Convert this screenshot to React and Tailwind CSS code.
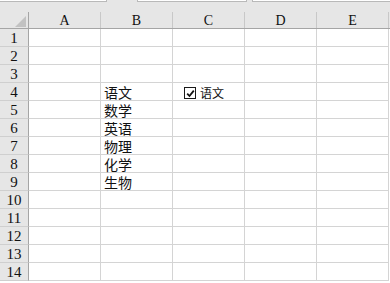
import React from 'react';

const cols = ['A', 'B', 'C', 'D', 'E'];
const rows = Array.from({ length: 14 }, (_, i) => i + 1);

// column B values, keyed by row number
const subjects = {
  4: '语文',
  5: '数学',
  6: '英语',
  7: '物理',
  8: '化学',
  9: '生物'
};

const headFont = { fontFamily: '"Liberation Serif", "DejaVu Serif", serif' };
const cjkFont = { fontFamily: '"Noto Sans CJK SC", sans-serif' };

function CheckBox() {
  return (
    <div className="flex items-center gap-[4px] pl-[11px] pt-[4px]">
      <div className="w-[12px] h-[12px] border border-[#1a1a1a] bg-white flex items-center justify-center">
        <svg width="9" height="9" viewBox="0 0 9 9">
          <path d="M1.2 4.6 L3.5 7 L7.8 1.6" fill="none" stroke="#111" strokeWidth="1.8" />
        </svg>
      </div>
      <span className="text-[12px] leading-[12px] text-[#111]" style={cjkFont}>语文</span>
    </div>
  );
}

export default function App() {
  return (
    <div className="w-[390px] h-[283px] overflow-hidden bg-white">
      {/* formula bar strip */}
      <div className="h-[12px] bg-[#e6e6e6] flex items-start gap-[30px]">
        <div className="w-[107px] h-[2px] bg-white border-b border-r border-[#b9b9b9]" />
        <div className="w-[110px] h-[2px] bg-white border-b border-x border-[#b9b9b9]" />
        <div className="flex-1 h-[2px] bg-white border-b border-l border-[#b9b9b9] -ml-[25px]" />
      </div>

      {/* column headers */}
      <div className="flex h-[17px] bg-[#e6e6e6] border-b border-[#a5a5a5]">
        <div className="w-[29px] shrink-0 border-r border-[#a5a5a5] relative">
          <svg className="absolute left-[15px] top-[4px]" width="11" height="11" viewBox="0 0 11 11">
            <polygon points="0,11 11,11 11,0" fill="#c2c2c2" />
          </svg>
        </div>
        {cols.map(c => (
          <div
            key={c}
            className="w-[72px] shrink-0 border-r border-[#c8c8c8] flex items-center justify-center text-[14px] leading-[14px] text-[#111] pt-[2px]"
            style={headFont}
          >
            {c}
          </div>
        ))}
      </div>

      {/* rows */}
      {rows.map(r => (
        <div key={r} className="flex h-[18px]">
          <div
            className="w-[29px] shrink-0 bg-[#e6e6e6] border-r border-[#a5a5a5] border-b border-b-[#cfcfcf] flex items-center justify-center text-[15px] leading-[15px] text-[#111] pt-[2px]"
            style={headFont}
          >
            {r}
          </div>
          {cols.map(c => (
            <div key={c} className="w-[72px] shrink-0 border-r border-b border-[#d4d4d4]">
              {c === 'B' && subjects[r] && (
                <div className="pl-[3px] pt-[2px] text-[14px] leading-[14px] text-[#111]" style={cjkFont}>
                  {subjects[r]}
                </div>
              )}
              {c === 'C' && r === 4 && <CheckBox />}
            </div>
          ))}
        </div>
      ))}
    </div>
  );
}
